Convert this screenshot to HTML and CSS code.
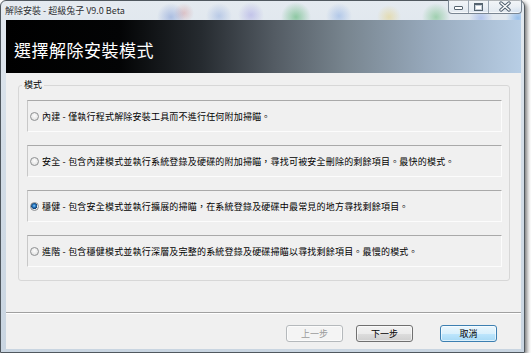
FILE: index.html
```html
<!DOCTYPE html>
<html>
    <head>
        <meta charset="utf-8">
        <link rel="stylesheet" href="styles.css">
    </head>
    <body>
        <div class="window">
            <div class="titlebar">
                <span class="title">解除安裝 - 超級兔子 V9.0 Beta</span>
                <div class="caption">
                    <span class="cap cap-min"><i></i></span>
                    <span class="cap cap-max"><i></i></span>
                    <span class="cap cap-close">
                        <svg width="14" height="11" viewBox="0 0 14 11">
                            <path d="M3 2 L11 9 M11 2 L3 9" stroke="#4d5c6c" stroke-width="3.4" stroke-linecap="round"/>
                            <path d="M3 2 L11 9 M11 2 L3 9" stroke="#fff" stroke-width="1.5" stroke-linecap="round"/>
                        </svg>
                    </span>
                </div>
            </div>
            <div class="client">
                <div class="banner">選擇解除安裝模式</div>
                <fieldset class="modes">
                    <legend>模式</legend>
                    <div class="option-list">
                        <label class="option"><input type="radio" name="mode">內建 - 僅執行程式解除安裝工具而不進行任何附加掃瞄。</label>
                        <label class="option"><input type="radio" name="mode">安全 - 包含內建模式並執行系統登錄及硬碟的附加掃瞄，尋找可被安全刪除的剩餘項目。最快的模式。</label>
                        <label class="option"><input type="radio" name="mode" checked>穩健 - 包含安全模式並執行擴展的掃瞄，在系統登錄及硬碟中最常見的地方尋找剩餘項目。</label>
                        <label class="option"><input type="radio" name="mode">進階 - 包含穩健模式並執行深層及完整的系統登錄及硬碟掃瞄以尋找剩餘項目。最慢的模式。</label>
                    </div>
                </fieldset>
                <div class="footer">
                    <button class="btn" disabled>上一步</button>
                    <button class="btn btn-next">下一步</button>
                    <button class="btn btn-default">取消</button>
                </div>
            </div>
        </div>
    </body>
</html>
```

FILE: styles.css
```css
* {box-sizing: border-box;}
html, body {margin: 0; padding: 0; background: #fff;}
body {font-family: "Noto Sans CJK TC", "Noto Sans", sans-serif; font-size: 9px; color: #000;}

/* window frame (aero glass) */
.window {
    width: 525px; height: 353px;
    border: 1px solid #50585f;
    border-radius: 6px 6px 0 0;
    padding: 0 3px 3px 5px;
    background: linear-gradient(to bottom, #e4eaf0, #d3dde7 40%, #c9d5e1);
    box-shadow: 2px 2px 4px rgba(0,0,0,.55);
}

.titlebar {
    display: flex; align-items: flex-start;
    height: 19px;
    background:
        radial-gradient(circle at 165px 16px, rgba(70,110,200,.35), transparent 14px),
        radial-gradient(circle at 178px 12px, rgba(200,80,80,.25), transparent 10px),
        radial-gradient(circle at 213px 15px, rgba(90,130,210,.3), transparent 13px),
        radial-gradient(circle at 245px 14px, rgba(120,110,220,.3), transparent 13px),
        radial-gradient(circle at 290px 16px, rgba(40,160,70,.45), transparent 15px),
        radial-gradient(circle at 333px 15px, rgba(90,140,220,.35), transparent 13px),
        radial-gradient(circle at 383px 16px, rgba(230,200,90,.4), transparent 12px),
        radial-gradient(circle at 430px 16px, rgba(60,170,80,.4), transparent 14px),
        radial-gradient(circle at 475px 17px, rgba(90,130,230,.35), transparent 12px),
        radial-gradient(circle at 512px 17px, rgba(60,140,230,.45), transparent 12px);
}
.title {margin-left: -1px; line-height: 19px; color: #2c2f33; text-shadow: 0 0 4px #fff;}

.caption {
    display: flex; margin: -1px -1px 0 auto;
    height: 14px;
    border: 1px solid #7a8693; border-top: 0;
    border-radius: 0 0 4px 4px;
    background: linear-gradient(to bottom, rgba(255,255,255,.55), rgba(225,232,240,.6));
    box-shadow: inset 0 -1px 0 rgba(255,255,255,.7);
}
.cap {display: flex; align-items: center; justify-content: center; height: 13px; border-left: 1px solid #9aa5b1;}
.cap:first-child {border-left: 0;}
.cap-min {width: 19px;}
.cap-min i {display: block; width: 9px; height: 4px; margin-top: 3px; border: 1px solid #55636f; border-radius: 1px; background: #fff;}
.cap-max {width: 20px;}
.cap-max i {display: block; width: 9px; height: 8px; border: 1px solid #55636f; border-top-width: 2px; background: #fff; box-shadow: inset 0 0 0 1px #c5ced8;}
.cap-close {width: 33px;}

/* client area */
.client {height: 329px; background: #f0f0f0;}

.banner {
    height: 53px;
    display: flex; align-items: center;
    padding: 5px 0 0 8px;
    font-size: 17px; letter-spacing: .5px; color: #fff;
    background: linear-gradient(to right, #000 0%, #030405 22%, #262b30 38%, #535b63 52%, #78858f 66%, #97a9bc 82%, #b8cee5 100%);
}

.modes {
    margin: 6px 11px 31px 12px; padding: 0;
    height: 202px; min-width: 0;
    border: 1px solid #d7d7d7; border-radius: 3px;
}
.modes legend {margin-left: 3px; padding: 0 2px; line-height: 12px;}

.option-list {display: flex; flex-direction: column; gap: 13px; padding: 9px 7px 0 8px;}
.option {
    display: flex; align-items: center;
    height: 32px; padding-left: 1px;
    border: 1px solid #fcfcfc;
    border-top-color: #a9a9a9; border-left-color: #c8c8c8;
    white-space: nowrap; letter-spacing: .2px;
}
.option input {
    appearance: none; -webkit-appearance: none;
    width: 9px; height: 9px; margin: 0 3px 0 1px; flex: none;
    border: 1px solid #8e9092; border-radius: 50%;
    background: radial-gradient(circle at 50% 40%, #fdfdfd, #dadada);
}
.option input:checked {
    background: radial-gradient(circle at 45% 40%, #8fd0ff 0, #2a7cc4 1.4px, #123f73 3px, #f2f2f2 3.3px, #dadada);
}

.footer {
    display: flex; justify-content: flex-end;
    height: 37px; padding: 12px 24px 0 0;
    border-top: 1px solid #a0a0a0;
    box-shadow: inset 0 1px 0 #fff;
}
.btn {
    width: 57px; height: 17px; padding: 0; margin: 0 0 0 13px;
    font: inherit; color: #000;
    border: 1px solid #707070; border-radius: 3px;
    background: linear-gradient(to bottom, #f2f2f2 0%, #ebebeb 50%, #dddddd 51%, #cfcfcf 100%);
    box-shadow: inset 0 0 0 1px rgba(255,255,255,.6);
}
.btn:disabled {color: #9a9a9a; border-color: #b5b9bc; background: #f4f4f4;}
.btn-default {
    margin-left: 27px;
    border-color: #3c7fb1;
    background: linear-gradient(to bottom, #eaf6fd 0%, #d9f0fc 50%, #bee6fd 51%, #a7d9f5 100%);
}
```
